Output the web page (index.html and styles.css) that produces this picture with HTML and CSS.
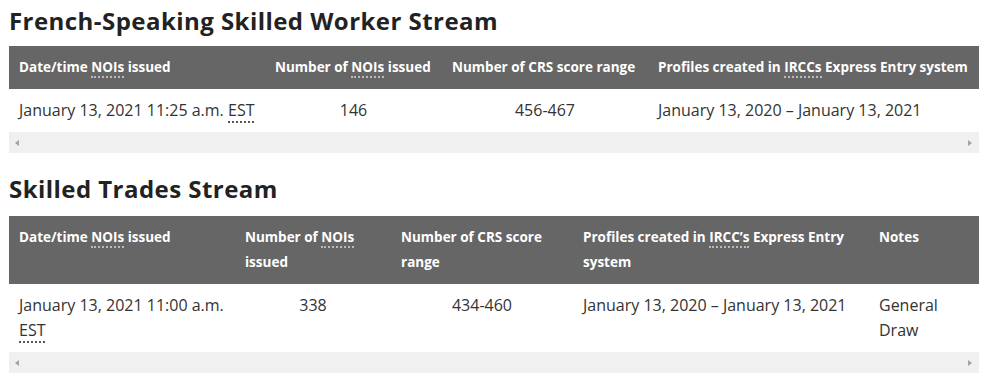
FILE: index.html
```html
<!DOCTYPE html>
<html lang="en">
<head>
<meta charset="utf-8">
<link rel="stylesheet" href="styles.css">
</head>
<body>
<main class="page">
  <h2 class="stream-title first">French-Speaking Skilled Worker Stream</h2>
  <div class="table-wrap">
    <table class="draws t1">
      <thead>
        <tr>
          <th class="c1">Date/time <abbr>NOIs</abbr> issued</th>
          <th class="c2">Number of <abbr>NOIs</abbr> issued</th>
          <th class="c3">Number of CRS score range</th>
          <th class="c4">Profiles created in <abbr>IRCCs</abbr> Express Entry system</th>
        </tr>
      </thead>
      <tbody>
        <tr>
          <td>January 13, 2021 11:25 a.m. <abbr>EST</abbr></td>
          <td class="center">146</td>
          <td class="center">456-467</td>
          <td>January 13, 2020 – January 13, 2021</td>
        </tr>
      </tbody>
    </table>
    <div class="scrollbar"><span class="arrow left"></span><span class="arrow right"></span></div>
  </div>

  <h2 class="stream-title second">Skilled Trades Stream</h2>
  <div class="table-wrap">
    <table class="draws t2">
      <thead>
        <tr>
          <th class="c1">Date/time <abbr>NOIs</abbr> issued</th>
          <th class="c2">Number of <abbr>NOIs</abbr> issued</th>
          <th class="c3">Number of CRS score range</th>
          <th class="c4">Profiles created in <abbr>IRCC’s</abbr> Express Entry system</th>
          <th class="c5">Notes</th>
        </tr>
      </thead>
      <tbody>
        <tr>
          <td>January 13, 2021 11:00 a.m. <abbr>EST</abbr></td>
          <td class="center">338</td>
          <td class="center">434-460</td>
          <td>January 13, 2020 – January 13, 2021</td>
          <td>General Draw</td>
        </tr>
      </tbody>
    </table>
    <div class="scrollbar"><span class="arrow left"></span><span class="arrow right"></span></div>
  </div>
</main>
</body>
</html>
```

FILE: styles.css
```css
html, body {
  margin: 0;
  padding: 0;
  background: #fff;
}

.page {
  width: 970px;
  margin-left: 9px;
  font-family: "Open Sans", "Liberation Sans", sans-serif;
  color: #333;
}

.stream-title {
  margin: 0;
  font-family: "Open Sans", "Liberation Sans", sans-serif;
  font-weight: 700;
  font-size: 24px;
  line-height: 30px;
  color: #222;
  letter-spacing: 0.45px;
}

.stream-title.first {
  padding-top: 6px;
  margin-bottom: 10px;
}

.stream-title.second {
  margin-top: 21px;
  margin-bottom: 12px;
}

.table-wrap {
  width: 970px;
}

.draws {
  width: 100%;
  border-collapse: collapse;
  table-layout: fixed;
}

.draws th {
  background: #666;
  color: #fff;
  font-weight: 700;
  font-size: 13.5px;
  line-height: 25px;
  text-align: left;
  vertical-align: top;
  padding: 9px 10px;
}

.draws td {
  font-size: 16px;
  line-height: 25px;
  vertical-align: top;
  padding: 9px 10px;
  color: #333;
}

.draws td.center {
  text-align: center;
}

abbr {
  text-decoration: none;
  border-bottom: 2px dotted #555;
}

th abbr {
  border-bottom-color: #bbb;
}

.t1 .c1 { width: 236px; }
.t1 .c2 { width: 157px; }
.t1 .c3 { width: 186px; }
.t1 .c4 { width: auto; }

.t2 .c1 { width: 206px; }
.t2 .c2 { width: 136px; }
.t2 .c3 { width: 162px; }
.t2 .c4 { width: 276px; }
.t2 .c5 { width: auto; }

.scrollbar {
  height: 21px;
  background: #f0f0f0;
  display: flex;
  align-items: center;
  justify-content: space-between;
  padding: 0 7px 0 6px;
}

.arrow {
  width: 0;
  height: 0;
  border-top: 3.5px solid transparent;
  border-bottom: 3.5px solid transparent;
}

.arrow.left {
  border-right: 4px solid #a3a3a3;
}

.arrow.right {
  border-left: 4px solid #a3a3a3;
}
```
